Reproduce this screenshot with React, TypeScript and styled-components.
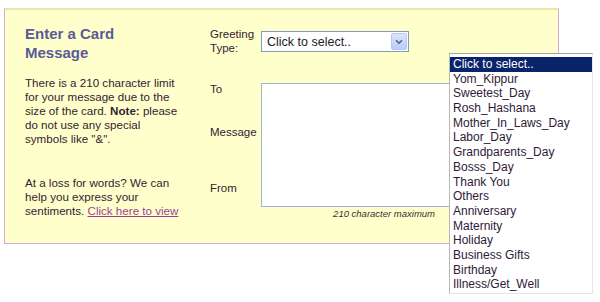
import React from "react";
import styled, { createGlobalStyle } from "styled-components";

const GlobalStyle = createGlobalStyle`
  html, body {
    margin: 0;
    padding: 0;
    background: #ffffff;
  }
  body {
    font-family: "Liberation Sans", Arial, sans-serif;
  }
`;

const Page = styled.div`
  position: relative;
  width: 600px;
  height: 302px;
  overflow: hidden;
`;

const Panel = styled.div`
  box-sizing: border-box;
  display: flex;
  margin: 8px 0 0 4px;
  width: 555px;
  height: 236px;
  padding: 14px 0 0 20px;
  background: #ffffcc;
  border-top: 2px solid #ebe5ab;
  border-left: 1px solid #d9a6d9;
  border-right: 1px solid #d9a6d9;
  border-bottom: 1px solid #d9a6d9;
`;

const InfoColumn = styled.div`
  width: 155px;
  flex-shrink: 0;
`;

const Heading = styled.h2`
  margin: 0 0 14px 0;
  max-width: 120px;
  font-size: 15px;
  line-height: 19px;
  font-weight: bold;
  color: #5a5a98;
`;

const Paragraph = styled.p<{ $gap?: number }>`
  margin: 0 0 ${(p) => p.$gap ?? 0}px 0;
  font-size: 11.6px;
  line-height: 14px;
  color: #332233;
`;

const Link = styled.a`
  color: #9c3f9c;
  text-decoration: underline;
  cursor: pointer;
`;

const FormColumn = styled.div`
  display: flex;
  flex-direction: column;
  margin-left: 30px;
  padding-top: 3px;
`;

const Row = styled.div<{ $top?: number }>`
  display: flex;
  align-items: flex-start;
  margin-top: ${(p) => p.$top ?? 0}px;
`;

const LabelStack = styled.div`
  display: flex;
  flex-direction: column;
  width: 51px;
  flex-shrink: 0;
`;

const Label = styled.span<{ $top?: number }>`
  display: block;
  margin-top: ${(p) => p.$top ?? 0}px;
  font-size: 11.5px;
  line-height: 14px;
  color: #332233;
`;

const SelectBox = styled.div`
  box-sizing: border-box;
  display: flex;
  align-items: center;
  justify-content: space-between;
  margin-top: 4px;
  width: 148px;
  height: 21px;
  padding: 1px 1px 1px 5px;
  background: #ffffff;
  border: 1px solid #7f9db9;
  font-size: 12.5px;
  color: #222222;
`;

const ArrowButton = styled.span`
  box-sizing: border-box;
  display: flex;
  align-items: center;
  justify-content: center;
  width: 16px;
  height: 17px;
  background: linear-gradient(180deg, #dce6fd 0%, #b9cdf8 100%);
  border: 1px solid #b2c6f3;
  border-radius: 2px;
`;

const FieldColumn = styled.div`
  display: flex;
  flex-direction: column;
`;

const MessageArea = styled.div`
  box-sizing: border-box;
  margin-top: 1px;
  width: 200px;
  height: 124px;
  background: #ffffff;
  border: 1px solid #9fb4cc;
`;

const Counter = styled.span`
  padding-right: 26px;
  text-align: right;
  font-size: 9.5px;
  line-height: 13px;
  font-style: italic;
  color: #333333;
`;

const Popup = styled.ul`
  position: absolute;
  left: 449px;
  top: 53px;
  box-sizing: border-box;
  width: 144px;
  margin: 0;
  padding: 3px 0 1px 0;
  list-style: none;
  background: #ffffff;
  border-top: 1px solid #a4a4a4;
  border-left: 1px solid #b8b8b8;
  border-right: 1px solid #e4e4e4;
  border-bottom: 1px solid #e4e4e4;
`;

const Option = styled.li<{ $active?: boolean }>`
  padding-left: 3px;
  height: 14.7px;
  font-size: 12px;
  line-height: 14.7px;
  white-space: nowrap;
  color: ${(p) => (p.$active ? "#ffffff" : "#2e1a38")};
  background: ${(p) => (p.$active ? "#0a246a" : "transparent")};
`;

const options = [
  "Click to select..",
  "Yom_Kippur",
  "Sweetest_Day",
  "Rosh_Hashana",
  "Mother_In_Laws_Day",
  "Labor_Day",
  "Grandparents_Day",
  "Bosss_Day",
  "Thank You",
  "Others",
  "Anniversary",
  "Maternity",
  "Holiday",
  "Business Gifts",
  "Birthday",
  "Illness/Get_Well",
];

const App: React.FC = () => {
  return (
    <Page>
      <GlobalStyle />
      <Panel>
        <InfoColumn>
          <Heading>Enter a Card Message</Heading>
          <Paragraph $gap={30}>
            There is a 210 character limit for your message due to the size of the card.{" "}
            <b>Note:</b> please do not use any special symbols like "&amp;".
          </Paragraph>
          <Paragraph>
            At a loss for words? We can help you express your sentiments.{" "}
            <Link>Click here to view</Link>
          </Paragraph>
        </InfoColumn>
        <FormColumn>
          <Row>
            <LabelStack>
              <Label>Greeting</Label>
              <Label>Type:</Label>
            </LabelStack>
            <SelectBox>
              <span>Click to select..</span>
              <ArrowButton>
                <svg width="8" height="6" viewBox="0 0 8 6">
                  <path d="M1 1.2 L4 4.2 L7 1.2" fill="none" stroke="#4d6185" strokeWidth="1.6" />
                </svg>
              </ArrowButton>
            </SelectBox>
          </Row>
          <Row $top={27}>
            <LabelStack>
              <Label>To</Label>
              <Label $top={29}>Message</Label>
              <Label $top={42}>From</Label>
            </LabelStack>
            <FieldColumn>
              <MessageArea />
              <Counter>210 character maximum</Counter>
            </FieldColumn>
          </Row>
        </FormColumn>
      </Panel>
      <Popup>
        {options.map((o, i) => (
          <Option key={o} $active={i === 0}>
            {o}
          </Option>
        ))}
      </Popup>
    </Page>
  );
};

export default App;
